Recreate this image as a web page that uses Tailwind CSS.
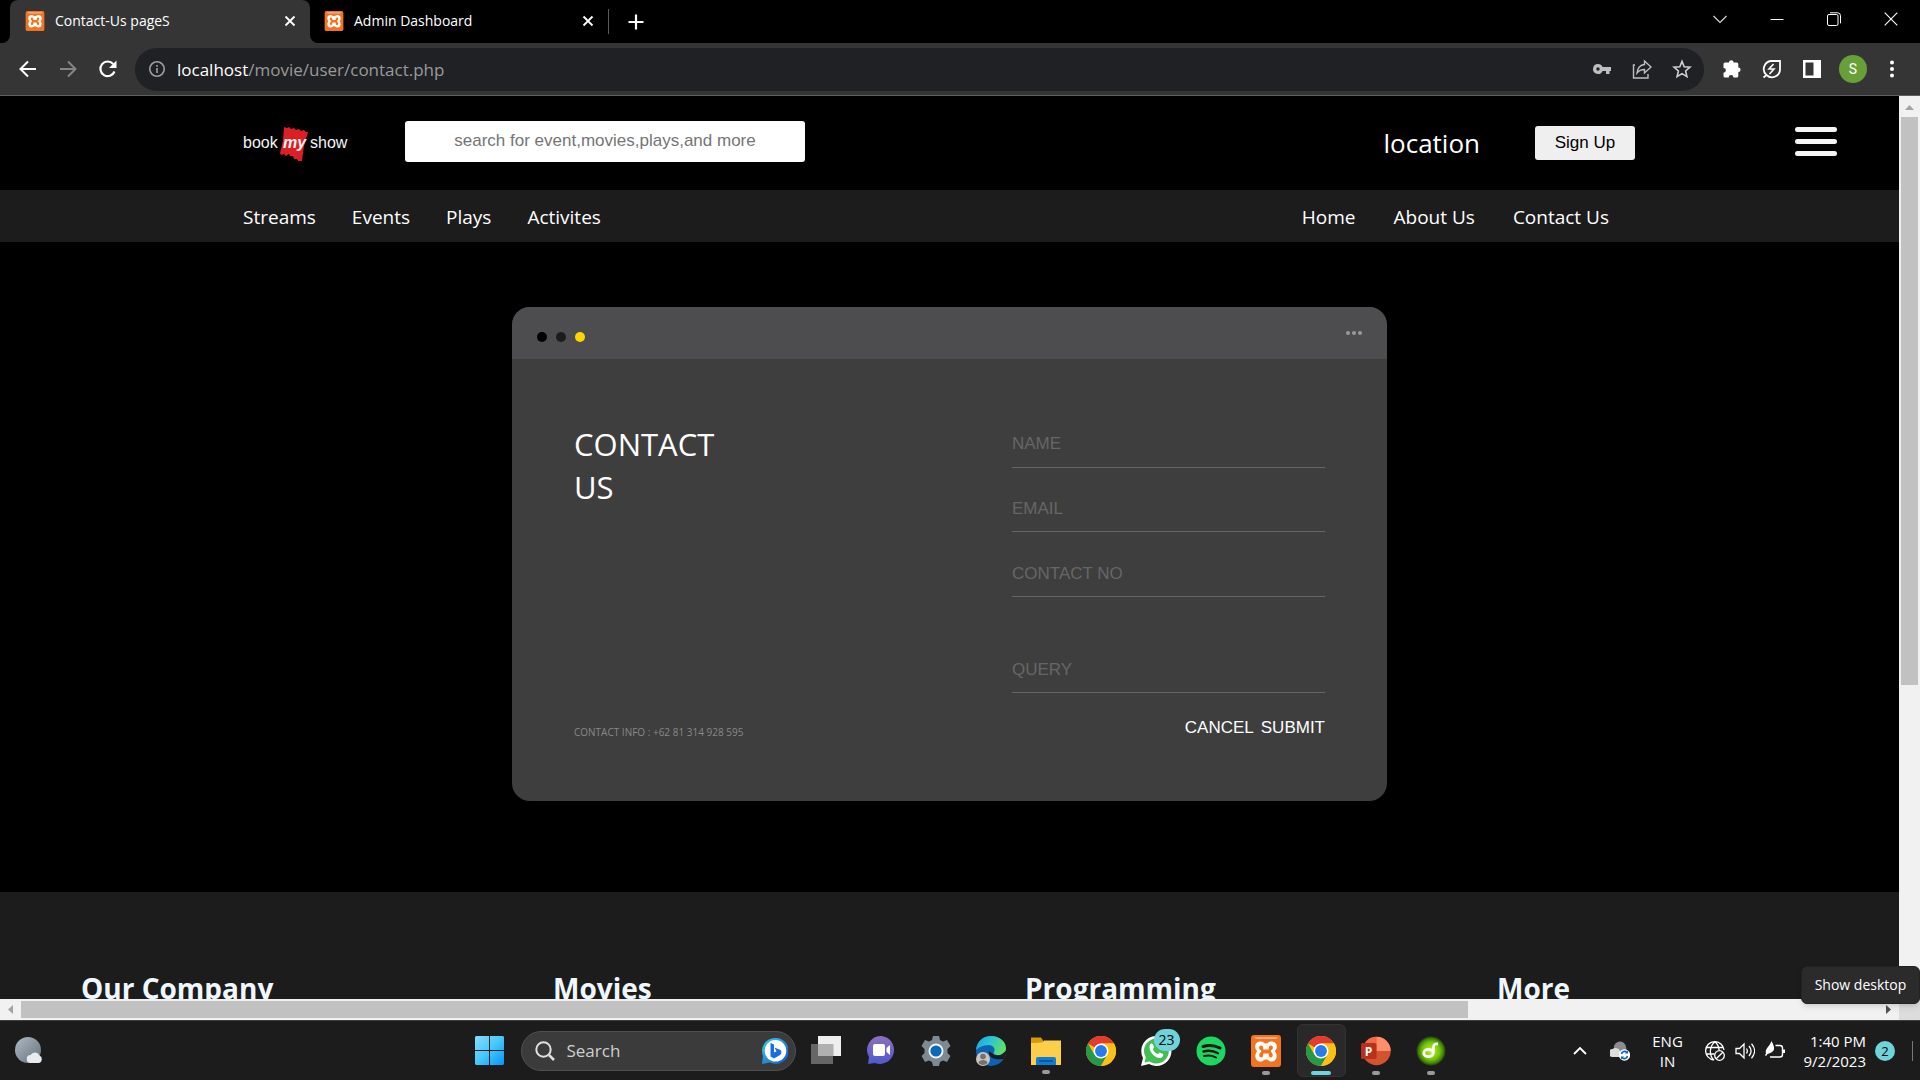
<!DOCTYPE html>
<html lang="en">
<head>
<meta charset="utf-8">
<title>Contact-Us pageS</title>
<script src="https://cdn.jsdelivr.net/npm/@tailwindcss/browser@4"></script>
</head>
<body class="h-screen overflow-hidden bg-black font-['Open_Sans',sans-serif] text-white">

<!-- Shared symbols -->
<svg class="hidden" aria-hidden="true">
  <symbol id="xampp" viewBox="0 0 30 32">
    <rect width="30" height="32" rx="3" fill="#f4731f"/>
    <path d="M3 2h24l-2 2H5z" fill="#f9b183"/>
    <path d="M10 6.500c-5 0-6.500 3.500-5.500 7 .4 1.300 1.400 1.700 1.400 2.500S4.800 18 4.500 19.500C3.800 23.500 6 26.500 9.500 26.500c2.800 0 3-2 5.500-2s2.700 2 5.500 2c3.500 0 5.700-3 5-7-.3-1.500-1.400-2.700-1.400-3.500s1-1.200 1.400-2.500c1-3.500-.5-7-5.500-7-2.600 0-2.800 2-5 2s-2.400-2-5-2z" fill="#fff"/>
    <path d="M10 10.500c2 0 2.300 2 2.300 4h5.400c0-2 .3-4 2.300-4 2.200 0 2.600 3.500.5 4.500-1 .5-1 1.500 0 2.500 2 1.500 1.500 5.500-.8 5-2-.3-2-2-2-4h-5.400c0 2 0 3.700-2 4-2.300.5-2.800-3.500-.8-5 1-1 1-2 0-2.500-2.100-1-1.700-4.500.5-4.500z" fill="#f4731f"/>
  </symbol>
  <symbol id="cross" viewBox="0 0 12 12"><path d="M1.500 1.500l9 9M10.500 1.500l-9 9" stroke="currentColor" stroke-width="1.800"/></symbol>
  <symbol id="chrome" viewBox="0 0 48 48">
    <circle cx="24" cy="24" r="24" fill="#fbc116"/>
    <path d="M24 24L3.200 12A24 24 0 0 1 44.800 12H24z" fill="#e33b2e"/>
    <path d="M3.200 12A24 24 0 0 0 24 48L34.400 30 24 24l-10.400 6z" fill="#279847"/>
    <path d="M24 12h20.800A24 24 0 0 1 24 48l10.400-18z" fill="#fbc116"/>
    <circle cx="24" cy="24" r="12" fill="#fff"/>
    <circle cx="24" cy="24" r="9.500" fill="#2a7bea"/>
  </symbol>
</svg>

<div class="flex h-full flex-col">

  <!-- Browser tab strip -->
  <header class="flex h-[43px] shrink-0 bg-black text-[14px]">
    <div class="relative ml-[10px] flex w-[300px] items-center rounded-t-lg bg-[#353535] pr-[14px] pb-2 pl-[15px]">
      <svg class="absolute -left-2 bottom-0 h-2 w-2" viewBox="0 0 8 8"><path d="M8 0v8H0a8 8 0 0 0 8-8z" fill="#353535"/></svg>
      <svg class="absolute -right-2 bottom-0 h-2 w-2" viewBox="0 0 8 8"><path d="M0 0v8h8a8 8 0 0 1-8-8z" fill="#353535"/></svg>
      <svg class="mt-[6px] h-5 w-5"><use href="#xampp"/></svg>
      <span class="mt-[6px] ml-[10px] flex-1">Contact-Us pageS</span>
      <button aria-label="Close tab" class="mt-[6px]"><svg class="h-3 w-3"><use href="#cross"/></svg></button>
    </div>
    <div class="flex w-[298px] items-center pr-[14px] pb-2 pl-[14px]">
      <svg class="mt-[6px] h-5 w-5"><use href="#xampp"/></svg>
      <span class="mt-[6px] ml-[10px] flex-1">Admin Dashboard</span>
      <button aria-label="Close tab" class="mt-[6px]"><svg class="h-3 w-3"><use href="#cross"/></svg></button>
    </div>
    <div class="mt-[9px] h-[25px] w-px bg-[#5a5a5a]"></div>
    <button aria-label="New tab" class="ml-[19px] h-[43px] w-4"><svg class="h-4 w-4" viewBox="0 0 16 16"><path d="M8 .5v15M.5 8h15" stroke="#fff" stroke-width="2.200"/></svg></button>
    <div class="mr-px ml-auto flex h-[37px] items-center">
      <button aria-label="Search tabs" class="flex w-[57px] justify-center"><svg class="h-[14px] w-[14px]" viewBox="0 0 14 14"><path d="M.5 4L7 10.500 13.500 4" fill="none" stroke="#ddd" stroke-width="1.100"/></svg></button>
      <button aria-label="Minimise" class="flex w-[57px] justify-center"><svg class="h-[14px] w-[14px]" viewBox="0 0 14 14"><path d="M.5 7.500h13" stroke="#fff"/></svg></button>
      <button aria-label="Restore" class="flex w-[57px] justify-center"><svg class="h-[14px] w-[14px]" viewBox="0 0 14 14" fill="none" stroke="#fff"><rect x=".5" y="2.500" width="10.500" height="11" rx="1.500"/><path d="M3 .8h7.500a3 3 0 0 1 3 3v7.500"/></svg></button>
      <button aria-label="Close" class="flex w-[57px] justify-center"><svg class="h-[14px] w-[14px]" viewBox="0 0 14 14"><path d="M.7.700l12.600 12.600M13.300.700L.7 13.300" stroke="#fff" stroke-width="1.100"/></svg></button>
    </div>
  </header>

  <!-- Address bar -->
  <div class="flex h-[53px] shrink-0 items-center border-b border-[#5f5f5f] bg-[#353535]">
    <button aria-label="Back" class="ml-[18px]"><svg class="h-5 w-5" viewBox="0 0 20 20" fill="none" stroke="#fff" stroke-width="2"><path d="M18 10H3M10 2.500L2.500 10l7.500 7.500"/></svg></button>
    <button aria-label="Forward" class="ml-5"><svg class="h-5 w-5" viewBox="0 0 20 20" fill="none" stroke="#858585" stroke-width="2"><path d="M2 10h15M10 2.500l7.500 7.500-7.500 7.500"/></svg></button>
    <button aria-label="Reload" class="ml-5"><svg class="h-5 w-5" viewBox="0 0 20 20"><path d="M16.500 12.500a7.300 7.300 0 1 1-1.300-7.500" fill="none" stroke="#fff" stroke-width="2.200"/><path d="M18.500 1.500v7.500H11z" fill="#fff"/></svg></button>
    <div class="ml-[17px] flex h-[43px] flex-1 items-center rounded-full bg-[#202124] pr-3 pl-[14px]">
      <svg class="h-4 w-4" viewBox="0 0 16 16"><circle cx="8" cy="8" r="7.200" fill="none" stroke="#9aa0a6" stroke-width="1.600"/><path d="M8 7v5M8 4v1.700" stroke="#9aa0a6" stroke-width="1.600"/></svg>
      <div role="textbox" aria-label="Address" class="ml-3 flex-1 pt-[2px] text-[17px]">localhost<span class="text-[#9a9a9a]">/movie/user/contact.php</span></div>
      <div class="flex items-center gap-5">
        <button aria-label="Passwords"><svg class="h-5 w-5" viewBox="0 0 20 20"><path d="M6 5a5 5 0 1 0 4.600 7H14v3h3.500v-3H19V8h-8.400A5 5 0 0 0 6 5zm0 3.300a1.700 1.700 0 1 1 0 3.400 1.700 1.700 0 0 1 0-3.400z" fill="#bfbfbf"/></svg></button>
        <button aria-label="Share"><svg class="h-5 w-5" viewBox="0 0 20 20" fill="none" stroke="#bfbfbf" stroke-width="1.400"><path d="M3 6H1.500v13H16v-4"/><path d="M12.500 2l6.500 6-6.500 6v-3.500C9 10.500 7 11.500 5 14c.5-4.500 3-8 7.500-8.500z"/></svg></button>
        <button aria-label="Bookmark"><svg class="h-5 w-5" viewBox="0 0 20 20" fill="none" stroke="#cfcfcf" stroke-width="1.600"><path d="M10 2.400l2.200 5.300 5.800.500-4.400 3.800 1.300 5.600-4.900-3-4.900 3 1.300-5.600L2 8.200l5.800-.5z"/></svg></button>
      </div>
    </div>
    <div class="ml-[18px] flex items-center gap-5">
      <button aria-label="Extensions"><svg class="h-5 w-5" viewBox="0 0 20 20"><path d="M7 3.500a2.300 2.300 0 0 1 4.600 0h3.200a1.500 1.500 0 0 1 1.500 1.500v3.500a2.300 2.300 0 0 1 0 4.600V17a1.500 1.500 0 0 1-1.500 1.500h-3.300a2.400 2.400 0 0 0-4.800 0H3A1.500 1.500 0 0 1 1.500 17v-3.300a2.400 2.400 0 0 0 0-4.800V5A1.500 1.500 0 0 1 3 3.500z" fill="#fff"/></svg></button>
      <button aria-label="Energy saver"><svg class="h-5 w-5" viewBox="0 0 20 20" fill="none" stroke="#fff" stroke-width="1.800"><path d="M18 2v8a8 8 0 0 1-13.500 6A8 8 0 0 1 10 2zM4.500 16L1.500 18.500"/><path d="M11.500 5l-4.500 5h5l-4.500 5" stroke-width="1.600"/></svg></button>
      <button aria-label="Side panel"><svg class="h-5 w-5" viewBox="0 0 20 20"><path d="M1 1h18v18H1zM3.500 3.500v13h8v-13z" fill="#fff" fill-rule="evenodd"/></svg></button>
    </div>
    <button aria-label="Profile" class="ml-[17px] h-7 w-7 rounded-full bg-[#689f38] font-['Roboto',sans-serif] text-[14px]">S</button>
    <button aria-label="Menu" class="mr-[18px] ml-[15px]"><svg class="h-5 w-5" viewBox="0 0 20 20" fill="#fff"><circle cx="10" cy="3.500" r="2"/><circle cx="10" cy="10" r="2"/><circle cx="10" cy="16.500" r="2"/></svg></button>
  </div>

  <!-- Viewport -->
  <div class="grid min-h-0 flex-1 grid-cols-[minmax(0,1fr)_21px] grid-rows-[minmax(0,1fr)_21px]">
    <div class="overflow-hidden bg-black">
      <div class="flex h-[94px] items-center pr-[62px] pb-1 pl-[243px]">
        <svg class="mt-1 h-9 w-[106px] shrink-0" viewBox="0 0 106 36" role="img" aria-label="bookmyshow">
          <path d="M41 2l3 1 2-1 2 2 3-1 2 2 3-1 2 2 3-1 2 2 2 0-4 14-1 7-1 8-3 1-2-3-3 0-1-3-3 0-1-2-3 2-2-2-3 1-1-2 3-12z" fill="#dc1f26"/>
          <g fill="#f4f4f4" font-family="Liberation Sans Narrow, Liberation Sans, sans-serif" font-size="16"><text x="0" y="23">book</text><text x="40" y="23" font-weight="bold" font-style="italic">my</text><text x="67" y="23">show</text></g>
        </svg>
        <input aria-label="Search" placeholder="search for event,movies,plays,and more" class="ml-14 h-[41px] w-[400px] rounded-[3px] bg-white text-center font-['Liberation_Sans',sans-serif] text-[17px] text-black placeholder:text-[#757575]">
        <a href="#" class="mt-1 ml-auto text-[26px]">location</a>
        <button class="mt-1 ml-[55px] h-[34px] w-[100px] rounded-[3px] bg-[#efefef] font-['Liberation_Sans',sans-serif] text-[17px] text-black">Sign Up</button>
        <button aria-label="Open menu" class="ml-40 flex w-[42px] flex-col gap-[7px]"><span class="h-[5px] rounded-full bg-[#f5f5f5]"></span><span class="h-[5px] rounded-full bg-[#f5f5f5]"></span><span class="h-[5px] rounded-full bg-[#f5f5f5]"></span></button>
      </div>
      <nav class="flex h-[52px] items-center justify-between bg-[#1c1c1c] pt-[2px] pr-[290px] pl-[243px] text-[19px]">
        <div class="flex gap-9"><a href="#">Streams</a><a href="#">Events</a><a href="#">Plays</a><a href="#">Activites</a></div>
        <div class="flex gap-[38px]"><a href="#">Home</a><a href="#">About Us</a><a href="#">Contact Us</a></div>
      </nav>

      <main class="flex h-[650px] flex-col items-center pt-[65px]">
        <section class="w-[875px] overflow-hidden rounded-[18px] bg-[#3e3e3e]">
          <div class="flex h-[52px] items-center justify-between bg-[#4d4d4f] px-[25px] pt-2">
            <div class="flex gap-[9px]"><span class="h-[10px] w-[10px] rounded-full bg-black"></span><span class="h-[10px] w-[10px] rounded-full bg-[#1c1c1c]"></span><span class="h-[10px] w-[10px] rounded-full bg-[#ffd700]"></span></div>
            <div class="flex gap-[2px] pb-2"><span class="h-1 w-1 rounded-full bg-[#999]"></span><span class="h-1 w-1 rounded-full bg-[#999]"></span><span class="h-1 w-1 rounded-full bg-[#999]"></span></div>
          </div>
          <div class="flex h-[442px] justify-between px-[62px] py-[62px]">
            <div class="flex flex-col justify-between pt-[2px]">
              <h1 class="text-[31px] leading-[43px]">CONTACT<br>US</h1>
              <p class="text-[10px] leading-[13px] text-[#888]">CONTACT INFO : +62 81 314 928 595</p>
            </div>
            <form class="flex w-[313px] flex-col font-['Liberation_Sans',sans-serif] text-[17px]">
              <input aria-label="Name" placeholder="NAME" class="h-[47px] border-b border-[#666] placeholder:text-[#666]">
              <input aria-label="Email" placeholder="EMAIL" class="mt-[17px] h-[47px] border-b border-[#666] pt-[2px] placeholder:text-[#666]">
              <input aria-label="Contact number" placeholder="CONTACT NO" class="mt-[18px] h-[47px] border-b border-[#666] pt-[2px] placeholder:text-[#666]">
              <input aria-label="Query" placeholder="QUERY" class="mt-[49px] h-[47px] border-b border-[#666] pt-[2px] placeholder:text-[#666]">
              <div class="mt-[25px] flex justify-end gap-[7px] leading-5"><button type="reset">CANCEL</button><button type="button">SUBMIT</button></div>
            </form>
          </div>
        </section>
      </main>

      <footer class="bg-[#1c1c1c] pt-[75px] text-[#f0f8ff]">
        <div class="-mr-[70px] grid grid-cols-4 pl-[81px] text-[28px] leading-[42px] font-bold">
          <h2>Our Company</h2><h2>Movies</h2><h2>Programming</h2><h2>More</h2>
        </div>
      </footer>
    </div>

    <!-- Scroll bars -->
    <div class="flex flex-col items-center bg-[#f1f1f1]">
      <svg class="h-[21px] w-[21px] shrink-0" viewBox="0 0 21 21"><path d="M6 14l4.500-5L15 14z" fill="#a3a3a3"/></svg>
      <div class="h-[568px] w-[17px] bg-[#c1c1c1]"></div>
    </div>
    <div class="flex items-center bg-[#f1f1f1]">
      <svg class="h-[21px] w-[21px] shrink-0" viewBox="0 0 21 21"><path d="M13 6v9L8 10.500z" fill="#a3a3a3"/></svg>
      <div class="mr-auto h-[17px] w-[1447px] bg-[#c1c1c1]"></div>
      <svg class="h-[21px] w-[21px] shrink-0" viewBox="0 0 21 21"><path d="M8 6v9l5-4.500z" fill="#505050"/></svg>
    </div>
    <div class="bg-[#dcdcdc]"></div>
  </div>

  <!-- Taskbar -->
  <footer class="grid h-[60px] shrink-0 grid-cols-[1fr_auto_1fr] items-center border-t border-[#3c4043] bg-[#1c1c1c]">
    <button aria-label="Weather" class="ml-[15px] w-7"><svg class="h-7 w-7" viewBox="0 0 28 28"><defs><linearGradient id="moon" x1="0" y1="0" x2="1" y2="1"><stop stop-color="#b0bac4"/><stop offset="1" stop-color="#66707a"/></linearGradient></defs><circle cx="13" cy="13" r="13" fill="url(#moon)"/><path d="M16 26a4 4 0 0 1-.5-8 5 5 0 0 1 9 .5 4 4 0 0 1-.5 7.500z" fill="#e8ebee"/></svg></button>

    <div class="flex items-center">
      <button aria-label="Start" class="flex w-[55px] justify-center"><svg class="h-[29px] w-[29px]" viewBox="0 0 29 29"><defs><linearGradient id="win" x1="0" y1="0" x2="1" y2="1"><stop stop-color="#86dcff"/><stop offset=".5" stop-color="#45c8fb"/><stop offset="1" stop-color="#0a93f8"/></linearGradient></defs><path d="M1 0h13v14H0V1zM15 0h13l1 1v13H15zM0 15h14v14H1l-1-1zM15 15h14v13l-1 1H15z" fill="url(#win)"/></svg></button>
      <button class="mr-[3px] ml-1 flex h-10 w-[275px] items-center rounded-full border border-[#505050] bg-[#3b3b3b] pr-[7px] pl-[13px] text-left text-[17px] text-[#cfcfcf]">
        <svg class="h-5 w-5" viewBox="0 0 20 20" fill="none" stroke="#e0e0e0" stroke-width="2"><circle cx="8.500" cy="8.500" r="7.200"/><path d="M14 14l5 5" stroke-width="2.500"/></svg>
        <span class="ml-3 flex-1">Search</span>
        <svg class="h-[26px] w-[26px]" viewBox="0 0 26 26"><defs><linearGradient id="bing" x1="0" y1="0" x2="1" y2="1"><stop stop-color="#2fd0e8"/><stop offset="1" stop-color="#174fc8"/></linearGradient></defs><path d="M13 0a13 13 0 1 1-5 24.600L0 26l1-8A13 13 0 0 1 13 0z" fill="url(#bing)"/><circle cx="13.500" cy="12.800" r="10.800" fill="#fff"/><path d="M8.500 5l3.500 1.500v9l-3.500 3zM8.500 18.500v-3l6-2-2-4 6 2.500c1.500 1 1 4-.5 5L12 20.500z" fill="#1a6fe0"/></svg>
      </button>
      <button aria-label="Task view" class="flex w-[55px] justify-center"><svg class="h-[29px] w-[30px]" viewBox="0 0 30 29"><path d="M0 8h22v20H0z" fill="#666"/><path d="M7 0h23v20H7z" fill="#eee"/><path d="M7 8h15.500v12H7z" fill="#b0b0b0"/></svg></button>
      <button aria-label="Chat" class="flex w-[55px] justify-center"><svg class="h-[29px] w-[29px]" viewBox="0 0 29 29"><defs><linearGradient id="chat" x1="0" y1="0" x2="0" y2="1"><stop stop-color="#8d70bd"/><stop offset="1" stop-color="#5058d0"/></linearGradient></defs><path d="M14.500 0A14 14 0 1 1 8 27l-7 1 1-7A14 14 0 0 1 14.500 0z" fill="url(#chat)"/><rect x="6" y="8" width="12" height="12" rx="2" fill="#fff"/><path d="M19.500 12l3.500-3v10l-3.500-3z" fill="#fff"/></svg></button>
      <button aria-label="Settings" class="flex w-[55px] justify-center"><svg class="h-[30px] w-[30px]" viewBox="0 0 30 30"><path d="M12 0h6l1 4 3 1.500L26 4l3.500 6-3 3v4l3 3-3.500 6-4-1.500-3 1.500-1 4h-6l-1-4-3-1.500L4 26 .5 20l3-3v-4l-3-3L4 4l4 1.500L11 4z" fill="#7e8991"/><circle cx="15" cy="15" r="7.500" fill="#eef3f7"/><circle cx="15" cy="15" r="5.600" fill="#0a68b8"/></svg></button>
      <button aria-label="Edge" class="flex w-[55px] justify-center"><svg class="h-8 w-[30px]" viewBox="0 0 30 32"><defs><linearGradient id="edge" x1="0" y1="0" x2="1" y2=".4"><stop stop-color="#199ddf"/><stop offset=".5" stop-color="#2cc5d4"/><stop offset="1" stop-color="#5fe06a"/></linearGradient></defs><circle cx="15" cy="16" r="15" fill="#0e62b5"/><path d="M0 15C1 6 7 1 15 1c9 0 15 6 15 12 0 5-4 7-8 7-3 0-5-1-4-3 2-3-1-7-5-7-6 0-11 3-13 5z" fill="url(#edge)"/><path d="M13 16c-1 6 4 9 14 8l1 0 3-9-6 5c-4 1-7 0-8-1z" fill="#1c1c1c"/><circle cx="7" cy="24" r="7" fill="#c9c5c2"/><circle cx="7" cy="21.500" r="2.800" fill="#77706c"/><path d="M2.500 28c0-4 9-4 9 0-2 2.500-7 2.500-9 0z" fill="#77706c"/></svg></button>
      <button aria-label="File Explorer" class="relative flex w-[55px] justify-center"><svg class="h-[29px] w-[30px]" viewBox="0 0 30 29"><path d="M0 1.500h10l2 3v5H0z" fill="#d9980a"/><path d="M0 7l11-.5 2-2H30V29H0z" fill="#fcce4a"/><path d="M5 29v-6a2 2 0 0 1 2-2h16a2 2 0 0 1 2 2v6z" fill="#0c7fd4"/><path d="M8 25h14" stroke="#074f93" stroke-width="1.500"/></svg><span class="absolute -bottom-[9px] h-1 w-2 rounded-full bg-[#9a9a9a]"></span></button>
      <button aria-label="Chrome" class="flex w-[55px] justify-center"><svg class="h-[30px] w-[30px]"><use href="#chrome"/></svg></button>
      <button aria-label="WhatsApp" class="relative flex w-[55px] justify-center"><svg class="h-8 w-8" viewBox="0 0 32 32"><path d="M16 1a15 15 0 1 1-7 28l-8 2 2-8A15 15 0 0 1 16 1z" fill="#fff"/><path d="M16 3.500a12.500 12.500 0 1 1-6.500 23L4.500 27.500l1.300-5A12.500 12.500 0 0 1 16 3.500z" fill="#43be55"/><path d="M10 9.500c1-1.500 2.500-1 3 0l1 2.500c.3 1-1.500 2-1 2.800 1 2 2.500 3.300 4.500 4.200.8.300 1.500-1.800 2.500-1.500l3 1.500c1 1-.5 3.500-2.500 4C15 23.500 7.500 16 10 9.500z" fill="#fff"/></svg><span class="absolute -top-[6px] left-[25px] h-[22px] w-[26px] rounded-full bg-[#6fd3da] text-center text-[14px] leading-[22px] text-black">23</span></button>
      <button aria-label="Spotify" class="flex w-[55px] justify-center"><svg class="h-[30px] w-[30px]" viewBox="0 0 30 30" fill="none" stroke="#161616" stroke-linecap="round"><circle cx="15" cy="15" r="14.500" fill="#1ed760" stroke="none"/><path d="M7 10.500c6-1.700 12-1 17 1.500" stroke-width="3"/><path d="M7.500 15.500c5-1.400 10-.7 14.500 1.700" stroke-width="2.400"/><path d="M8 20c4-1 8.500-.5 12 1.500" stroke-width="2"/></svg></button>
      <button aria-label="XAMPP" class="relative flex w-[55px] justify-center"><svg class="h-8 w-[30px]"><use href="#xampp"/></svg><span class="absolute -bottom-2 h-1 w-2 rounded-full bg-[#9a9a9a]"></span></button>
      <button aria-label="Chrome, active" class="relative flex w-[55px] justify-center"><span class="flex h-[53px] w-[49px] items-center justify-center rounded-md border border-[#333] bg-[#292929]"><svg class="h-[30px] w-[30px]"><use href="#chrome"/></svg></span><span class="absolute bottom-[2px] h-1 w-5 rounded-full bg-[#6fd3da]"></span></button>
      <button aria-label="PowerPoint" class="relative flex w-[55px] justify-center"><svg class="h-[30px] w-[30px]" viewBox="0 0 30 30"><circle cx="15.500" cy="15" r="14.200" fill="#d35230"/><path d="M15.500.800A14.200 14.200 0 0 0 1.300 15h14.200z" fill="#ed6c47"/><path d="M15.500.800A14.200 14.200 0 0 1 29.700 15H15.500z" fill="#ff8f6b"/><rect y="7" width="15.500" height="16" rx="1.500" fill="#b93217"/><text x="7.500" y="19.500" text-anchor="middle" font-family="Open Sans, sans-serif" font-size="12" font-weight="bold" fill="#fff">P</text></svg><span class="absolute -bottom-[9px] h-1 w-2 rounded-full bg-[#9a9a9a]"></span></button>
      <button aria-label="Music player" class="relative flex w-[55px] justify-center"><svg class="h-[30px] w-[30px]" viewBox="0 0 30 30"><defs><radialGradient id="lime"><stop stop-color="#c4f52a"/><stop offset=".6" stop-color="#6fc008"/><stop offset=".85" stop-color="#3b7a06"/><stop offset="1" stop-color="#1c1c1c"/></radialGradient></defs><circle cx="15" cy="15" r="15" fill="url(#lime)"/><ellipse cx="12.500" cy="17" rx="4.700" ry="3.600" fill="none" stroke="#fff" stroke-width="2.800"/><path d="M17.200 17.500l.3-6c.2-3 1.500-4 4.500-3.500" fill="none" stroke="#fff" stroke-width="2.800"/></svg><span class="absolute -bottom-[9px] h-1 w-2 rounded-full bg-[#9a9a9a]"></span></button>
    </div>

    <div class="flex items-center justify-end text-[15px] leading-5">
      <button aria-label="Show hidden icons"><svg class="h-[14px] w-[14px]" viewBox="0 0 14 14"><path d="M1 10l6-6 6 6" fill="none" stroke="#fff" stroke-width="1.800"/></svg></button>
      <button aria-label="OneDrive" class="ml-[23px]"><svg class="h-5 w-5" viewBox="0 0 20 20"><path d="M4 7a6 6 0 0 1 12-1l1 5H5z" fill="#8c8c8c"/><path d="M3 16a4 4 0 0 1-.5-8C5 6 9 7 10 10l6 6z" fill="#ddd"/><circle cx="14.500" cy="14" r="5.700" fill="#fff"/><path d="M11.500 13a3.200 3.200 0 0 1 5.500-1.500M17.500 15a3.200 3.200 0 0 1-5.500 1.500" fill="none" stroke="#0a63b8" stroke-width="1.600"/><path d="M18 9.500v3h-3zM11 18.500v-3h3z" fill="#0a63b8"/></svg></button>
      <button class="ml-5 w-[36px] text-center">ENG<br>IN</button>
      <button aria-label="Network, sound and battery" class="ml-[19px] flex items-center gap-[10px]">
        <svg class="h-5 w-5" viewBox="0 0 20 20" fill="none" stroke="#fff" stroke-width="1.300"><path d="M19 9a9.200 9.200 0 1 0-10 10M1.500 6.500h17M1.500 13h8M9 19c-5-4-5-14 1-18 2.500 2 4 5 4 8"/><circle cx="14.500" cy="14.500" r="4.800"/><path d="M11.200 17.800l6.600-6.600"/></svg>
        <svg class="h-5 w-5" viewBox="0 0 20 20" fill="none" stroke="#fff" stroke-width="1.300"><path d="M1 7.500h3.500L9 3v14l-4.500-4.500H1zM11.500 7.500c1 1.500 1 3.500 0 5M14 5c2.500 3 2.500 7 0 10M16.500 2.800c4 4.500 4 10 0 14.400"/></svg>
        <svg class="h-5 w-5" viewBox="0 0 20 20" fill="none" stroke="#fff" stroke-width="1.400"><path d="M10.500 4.500H15A2.500 2.500 0 0 1 17.500 7v6.500A2.500 2.500 0 0 1 15 16H5"/><path d="M19 8.500v3.500" stroke-width="2"/><path d="M6.500 0c2 4 3.500 7 2 9.500S3.500 13 1 12.500C-.5 8 5 5 6.500 0zM2 15l3-4" fill="#fff" stroke="none"/><path d="M.5 14.500l2.500-3.500"/></svg>
      </button>
      <button class="ml-[19px] text-right">1:40 PM<br>9/2/2023</button>
      <span class="ml-[9px] h-5 w-5 rounded-full bg-[#6fd3da] text-center text-[13px] text-black">2</span>
      <button aria-label="Show desktop" class="mr-[7px] ml-[17px] h-5 w-px bg-[#777]"></button>
    </div>
  </footer>
</div>

<div role="tooltip" class="absolute right-0 bottom-[76px] flex h-[38px] w-[119px] items-center justify-center rounded-md border border-[#222] bg-[#2b2b2b] pb-[2px] text-[14px] shadow-md">Show desktop</div>
</body>
</html>
